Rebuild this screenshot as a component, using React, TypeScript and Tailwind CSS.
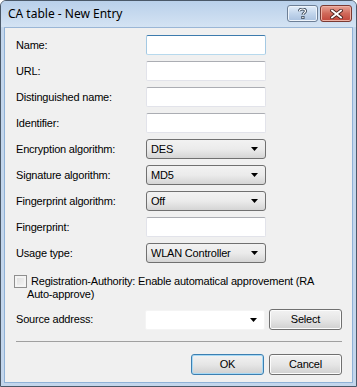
import React from 'react';

const font = "font-['Liberation_Sans',Tahoma,sans-serif] text-[11px] tracking-[-0.2px] text-black";

const TextBox: React.FC<{ focused?: boolean }> = ({ focused }) => (
  <div
    className={
      focused
        ? 'h-[20px] w-[120px] bg-white border border-[#a4c9e3] border-t-[#3d7bad] border-b-[#b7d9ed] rounded-[2px]'
        : 'h-[20px] w-[120px] bg-white border border-[#e2e3ea] border-t-[#abadb3] rounded-[2px]'
    }
  />
);

const Arrow: React.FC = () => (
  <svg width="7" height="4" viewBox="0 0 7 4" className="shrink-0">
    <path d="M0 0h7L3.5 4z" fill="#000" />
  </svg>
);

const Select: React.FC<{ value: string }> = ({ value }) => (
  <div className="flex h-[20px] w-[120px] items-center justify-between rounded-[3px] border border-[#707070] bg-gradient-to-b from-[#f2f2f2] via-[#ebebeb] to-[#d5d5d5] pl-[4px] pr-[7px]">
    <span className="leading-none">{value}</span>
    <Arrow />
  </div>
);

const Button: React.FC<{ label: string; primary?: boolean }> = ({ label, primary }) => (
  <div
    className={
      'flex h-[21px] w-[73px] items-center justify-center rounded-[3px] border bg-gradient-to-b from-[#f2f2f2] via-[#e6e6e6] to-[#d0d0d0] ' +
      (primary ? 'border-[#3c7fb1] shadow-[inset_0_0_0_1px_#a7d9f5]' : 'border-[#707070] shadow-[inset_0_0_0_1px_#fcfcfc]')
    }
  >
    {label}
  </div>
);

const rows: { label: string; control: React.ReactNode }[] = [
  { label: 'Name:', control: <TextBox focused /> },
  { label: 'URL:', control: <TextBox /> },
  { label: 'Distinguished name:', control: <TextBox /> },
  { label: 'Identifier:', control: <TextBox /> },
  { label: 'Encryption algorithm:', control: <Select value="DES" /> },
  { label: 'Signature algorithm:', control: <Select value="MD5" /> },
  { label: 'Fingerprint algorithm:', control: <Select value="Off" /> },
  { label: 'Fingerprint:', control: <TextBox /> },
  { label: 'Usage type:', control: <Select value="WLAN Controller" /> },
];

export default function App() {
  return (
    <div className="flex h-[387px] w-[357px] flex-col overflow-hidden rounded-t-[6px] border border-[#4a5868] bg-[#c3d6ec]">
      {/* title bar */}
      <div className="flex h-[26px] shrink-0 items-center justify-between bg-gradient-to-b from-[#b9d0ea] to-[#d4e3f3] pl-[7px] pr-[4px]">
        <span className="font-['Noto_Sans',sans-serif] text-[12px] text-black">CA table - New Entry</span>
        <div className="flex gap-[2px] self-start pt-[4px]">
          <div className="flex h-[17px] w-[31px] items-center justify-center rounded-[3px] border border-[#6d7f96] bg-gradient-to-b from-[#e4eef9] via-[#c2d5ec] to-[#a9c1df] shadow-[inset_0_0_0_1px_#eef4fb]">
            <svg width="9" height="11" viewBox="0 0 9 11">
              <path d="M1.5 3.2C1.5 1.6 2.8 1 4.5 1S7.5 1.8 7.5 3.1C7.5 4.8 5 5 5 6.8" fill="none" stroke="#3b4a5c" strokeWidth="3" />
              <path d="M1.5 3.2C1.5 1.6 2.8 1 4.5 1S7.5 1.8 7.5 3.1C7.5 4.8 5 5 5 6.8" fill="none" stroke="#fff" strokeWidth="1.2" />
              <rect x="3.3" y="8" width="3.2" height="3" fill="#3b4a5c" />
              <rect x="4.2" y="8.8" width="1.4" height="1.4" fill="#fff" />
            </svg>
          </div>
          <div className="flex h-[17px] w-[32px] items-center justify-center rounded-[3px] border border-[#7a3a33] bg-gradient-to-b from-[#e8a396] via-[#d0695a] to-[#c1453a] shadow-[inset_0_0_0_1px_#eeb2a6]">
            <svg width="13" height="10" viewBox="0 0 13 10">
              <path d="M2 1.5l9 7M11 1.5l-9 7" stroke="#4b231f" strokeWidth="3.6" strokeLinecap="square" />
              <path d="M2 1.5l9 7M11 1.5l-9 7" stroke="#fff" strokeWidth="1.8" strokeLinecap="square" />
            </svg>
          </div>
        </div>
      </div>

      {/* client area */}
      <div className="mx-[3px] mb-[3px] flex-1 border border-[#8fb1d6] border-t-[#9ab6d6] bg-[#f0f0f0]">
        <div className={`flex flex-col px-[10px] pt-[7px] ${font}`}>
          <div className="flex flex-col gap-[6px]">
            {rows.map((r) => (
              <div key={r.label} className="flex items-center">
                <span className="w-[131px] pl-[1px]">{r.label}</span>
                {r.control}
              </div>
            ))}
          </div>

          <p className="mt-[12px] w-[320px] -indent-[13px] pl-[12px] leading-[12px]">
            <span className="mr-[4px] inline-block h-[13px] w-[13px] border border-[#8f8f8f] bg-gradient-to-br from-[#dcdcdc] to-[#f7f7f7] align-[-3px] shadow-[inset_0_0_0_2px_#f4f4f4]" />
            Registration-Authority: Enable automatical approvement (RA Auto-approve)
          </p>

          <div className="mt-[9px] flex items-center">
            <span className="w-[131px] pl-[1px]">Source address:</span>
            <div className="flex h-[20px] w-[120px] items-center justify-end rounded-[2px] border border-[#f4f4f4] bg-white pr-[7px]">
              <Arrow />
            </div>
            <div className="ml-[4px]">
              <Button label="Select" />
            </div>
          </div>

          <div className="mt-[11px] ml-[1px] h-[2px] border-t border-[#a0a0a0] border-b-white" />

          <div className="mt-[11px] flex justify-end gap-[5px]">
            <Button label="OK" primary />
            <Button label="Cancel" />
          </div>
        </div>
      </div>
    </div>
  );
}
